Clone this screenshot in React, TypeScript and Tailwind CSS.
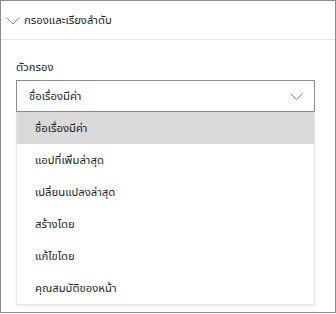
export default function App() {
  const items = [
    "ชื่อเรื่องมีค่า",
    "แอปที่เพิ่มล่าสุด",
    "เปลี่ยนแปลงล่าสุด",
    "สร้างโดย",
    "แก้ไขโดย",
    "คุณสมบัติของหน้า",
  ];
  return (
    <div className="w-[336px] h-[313px] border border-[#8a8a8a] bg-white font-['Noto_Sans_Thai_UI','Noto_Sans_Thai',sans-serif] text-[11.3px] text-[#201f1e] overflow-hidden">
      <div className="h-[39px] border-b border-[#e6e6e6] flex items-center pl-[5px]">
        <svg width="14" height="8" viewBox="0 0 14 8" className="mt-[1px]">
          <path d="M0.5 0.5 L7 7 L13.5 0.5" fill="none" stroke="#8a8886" strokeWidth="1" />
        </svg>
        <span className="ml-[4px] leading-[20px]">กรองและเรียงลำดับ</span>
      </div>
      <div className="pl-[15px] pt-[17px]">
        <div className="h-[20px] leading-[20px]">ตัวกรอง</div>
        <div className="mt-[3px] w-[299px] h-[32px] border border-[#8a8a8a] flex items-center justify-between pl-[12px] pr-[11px]">
          <span className="leading-[20px]">ชื่อเรื่องมีค่า</span>
          <svg width="13" height="7" viewBox="0 0 13 7">
            <path d="M0.5 0.5 L6.5 6.5 L12.5 0.5" fill="none" stroke="#8a8886" strokeWidth="1" />
          </svg>
        </div>
        <div className="w-[299px] border-x border-b border-[#e6e6e6] shadow-[0_2px_4px_rgba(0,0,0,0.06)] bg-white">
          {items.map((t, i) => (
            <div
              key={t}
              className={
                i === 0
                  ? "h-[32px] flex items-center pl-[18px] bg-[#d9d9d9]"
                  : "h-[32px] flex items-center pl-[18px]"
              }
            >
              <span className="leading-[20px]">{t}</span>
            </div>
          ))}
        </div>
      </div>
    </div>
  );
}
